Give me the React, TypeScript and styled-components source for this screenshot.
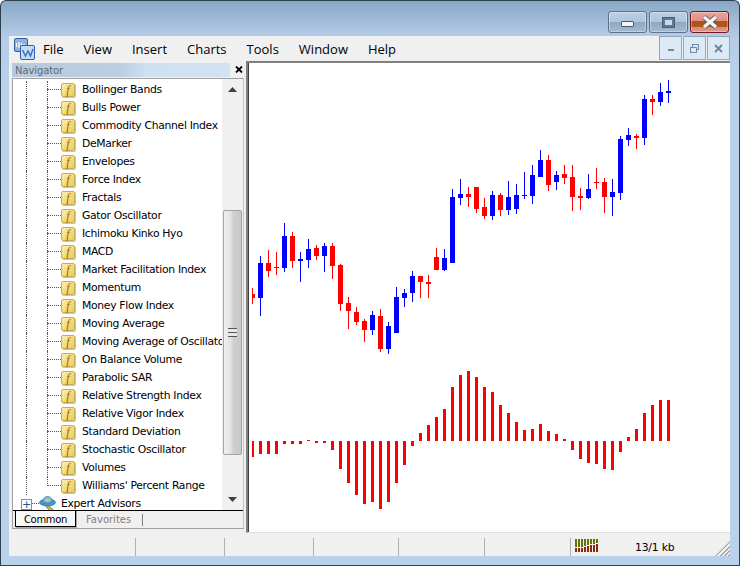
import * as React from 'react'
import styled, { createGlobalStyle } from 'styled-components'

const GlobalStyle = createGlobalStyle`
  html, body {
    margin: 0;
    padding: 0;
    background: #fff;
  }
  * {
    box-sizing: border-box;
  }
`

const UI_FONT = `"DejaVu Sans", Verdana, sans-serif`

const Frame = styled.div`
  width: 740px;
  height: 566px;
  display: flex;
  flex-direction: column;
  padding: 0 9px 9px 8px;
  border: 1px solid #2d3f4f;
  border-bottom-color: #16505e;
  border-radius: 6px 6px 0 0;
  background: linear-gradient(180deg, #88a6c6 0, #9ab6d3 14px, #b4cce6 36px, #b9d1ea 80px);
  overflow: hidden;
`

const TitleBar = styled.div`
  height: 35px;
  flex: none;
  display: flex;
  justify-content: flex-end;
  align-items: flex-start;
  gap: 2px;
  padding: 10px 1px 0 0;
`

const CaptionButton = styled.div<{ $close?: boolean }>`
  width: 39px;
  height: 22px;
  display: flex;
  align-items: center;
  justify-content: center;
  border: 1px solid ${p => (p.$close ? '#6e1a20' : '#5f748c')};
  border-radius: 3px;
  background: ${p =>
    p.$close
      ? 'linear-gradient(180deg, #e8a498 0, #df8f84 45%, #ad5018 46%, #b05a1e 75%, #d88a78 76%, #e09a8c 100%)'
      : 'linear-gradient(180deg, #bcd0e6 0, #afc5dd 48%, #8ea8c2 50%, #a3bad2 100%)'};
  box-shadow: inset 0 0 0 1px rgba(255, 255, 255, 0.35);
`

const MinGlyph = styled.div`
  width: 13px;
  height: 6px;
  margin-top: 4px;
  background: #f2f4f6;
  border: 1px solid #4e5d6c;
  border-radius: 1px;
`

const MaxGlyph = styled.div`
  width: 13px;
  height: 11px;
  background: #e8ecf0;
  border: 1px solid #4e5d6c;
  display: flex;
  align-items: center;
  justify-content: center;

  &::after {
    content: '';
    width: 7px;
    height: 5px;
    border: 2px solid #5b7a9a;
    background: #cdd8e4;
  }
`

const Client = styled.div`
  flex: 1;
  min-height: 0;
  display: flex;
  flex-direction: column;
  background: #f0f0f0;
`

const MenuBar = styled.div`
  height: 25px;
  flex: none;
  display: flex;
  align-items: center;
  padding-left: 5px;
`

const Logo = styled.svg`
  width: 21px;
  height: 22px;
  flex: none;
  margin-right: 8px;
`

const MenuItems = styled.div`
  display: flex;
  gap: 20px;
  flex: 1;
`

const MenuItem = styled.span`
  font: 13px "Open Sans", sans-serif;
  color: #000;
`

const MdiButtons = styled.div`
  display: flex;
  gap: 1px;
  align-self: flex-start;
`

const MdiButton = styled.div`
  width: 23px;
  height: 24px;
  display: flex;
  align-items: center;
  justify-content: center;
  background: #dce9f6;
  border: 1px solid #93a6b8;
`

const Main = styled.div`
  flex: 1;
  min-height: 0;
  display: flex;
`

const Navigator = styled.div`
  width: 237px;
  flex: none;
  display: flex;
  flex-direction: column;
  padding: 1px 2px 4px 3px;
`

const NavHeader = styled.div`
  height: 15px;
  flex: none;
  display: flex;
  align-items: center;
`

const NavTitle = styled.div`
  width: 218px;
  height: 14px;
  padding-left: 3px;
  font: 10px/15px ${UI_FONT};
  letter-spacing: -0.1px;
  color: #5c6c7c;
  background: linear-gradient(90deg, #b7c9dc 0, #bccee0 50%, #cfe0f1 62%, #d2e2f3 100%);
`

const NavClose = styled.svg`
  width: 8px;
  height: 7px;
  margin-left: 5px;
`

const NavBox = styled.div`
  flex: 1;
  min-height: 0;
  display: flex;
  flex-direction: column;
  margin-top: 1px;
  border: 1px solid #a0a0a0;
  border-right-color: #c4c4c4;
`

const TreeArea = styled.div`
  height: 431px;
  flex: none;
  display: flex;
  background: #fff;
  overflow: hidden;
`

const Tree = styled.div`
  flex: 1;
  min-width: 0;
  overflow: hidden;
  padding-top: 2px;
`

const Row = styled.div`
  height: 18px;
  display: flex;
  padding-left: 13px;
`

const Guide = styled.div<{ $half?: boolean }>`
  width: 21px;
  height: ${p => (p.$half ? '9px' : '18px')};
  flex: none;
  border-left: 1px dotted #555;
`

const Branch = styled.div`
  width: 14px;
  height: 9px;
  flex: none;
  margin-left: -21px;
  border-bottom: 1px dotted #555;
`

const FuncIcon = styled.div`
  width: 14px;
  height: 14px;
  flex: none;
  margin: 2px 7px 0 0;
  display: flex;
  align-items: center;
  justify-content: center;
  border: 1px solid #c8ae58;
  border-radius: 2px;
  background: linear-gradient(135deg, #fcefb0 0, #f6dc7c 50%, #f0cb52 100%);
  box-shadow: 1px 1px 0 #c4c4bc;
  font: italic 12px/12px "Liberation Serif", serif;
  color: #8a6a14;
`

const RowLabel = styled.span`
  font: 10.8px/18px ${UI_FONT};
  letter-spacing: -0.32px;
  white-space: nowrap;
  color: #000;
`

const PlusBox = styled.div`
  width: 11px;
  height: 11px;
  flex: none;
  margin: 4px 0 0 -5px;
  display: flex;
  align-items: center;
  justify-content: center;
  background: #fff;
  border: 1px solid #8c8c8c;
  font: 11px/9px ${UI_FONT};
  color: #2050a0;
`

const PlusLink = styled.div`
  width: 7px;
  height: 9px;
  flex: none;
  border-bottom: 1px dotted #555;
`

const ExpertIcon = styled.svg`
  width: 17px;
  height: 16px;
  flex: none;
  margin: 1px 5px 0 0;
`

const ScrollBar = styled.div`
  width: 21px;
  flex: none;
  display: flex;
  flex-direction: column;
  align-items: center;
  background: #f0f0f0;
`

const ScrollArrow = styled.svg<{ $down?: boolean }>`
  width: 9px;
  height: 5px;
  flex: none;
  margin: ${p => (p.$down ? '0 0 8px' : '8px 0 0')};
  transform: ${p => (p.$down ? 'rotate(180deg)' : 'none')};
`

const ScrollTrack = styled.div`
  flex: 1;
  width: 100%;
  display: flex;
  align-items: flex-start;
  justify-content: center;
  padding-top: 118px;
`

const ScrollThumb = styled.div`
  width: 19px;
  height: 245px;
  display: flex;
  align-items: center;
  justify-content: center;
  border: 1px solid #a4a4a4;
  border-radius: 2px;
  background: linear-gradient(90deg, #f0f0f0 0, #e2e2e2 40%, #cfcfcf 55%, #c8c8c8 100%);
`

const Grip = styled.div`
  width: 9px;
  height: 9px;
  background: repeating-linear-gradient(180deg, #555 0, #555 1px, #e8e8e8 1px, #e8e8e8 4px);
`

const TabStrip = styled.div`
  flex: 1;
  display: flex;
  align-items: flex-start;
  border-top: 1px solid #000;
  padding-left: 2px;
  background: #f0f0f0;
`

const ActiveTab = styled.div`
  width: 61px;
  height: 17px;
  margin-top: -1px;
  text-align: center;
  background: #f8f8f8;
  border: 1px solid #000;
  box-shadow: 1px 1px 0 #a8a8a8;
  font: 10px/17px ${UI_FONT};
  letter-spacing: -0.3px;
  color: #000;
`

const IdleTab = styled.div`
  height: 12px;
  margin-top: 3px;
  padding: 0 11px 0 10px;
  border-right: 1px solid #808080;
  font: 10px/12px ${UI_FONT};
  color: #808080;
`

const ChartPanel = styled.div`
  flex: 1;
  min-width: 0;
  background: #fff;
  border-top: 2px solid #808080;
  border-left: 2px solid #808080;
  border-bottom: 1px solid #e0e0e0;
  box-shadow: inset 1px 0 0 #404040;
`

const ChartSvg = styled.svg`
  display: block;
  width: 100%;
  height: 100%;
`

const StatusBar = styled.div`
  height: 23px;
  flex: none;
  display: flex;
  align-items: flex-end;
`

const StatusCell = styled.div<{ $w: number }>`
  width: ${p => p.$w}px;
  height: 18px;
  flex: none;
  border-right: 1px solid #b0b0b0;
`

const Traffic = styled.svg`
  width: 24px;
  height: 13px;
  flex: none;
  margin: 0 0 4px 4px;
`

const TrafficText = styled.span`
  margin: 0 0 2px 36px;
  font: 10.8px ${UI_FONT};
  letter-spacing: -0.2px;
  color: #000;
`

const SizeGrip = styled.div`
  width: 15px;
  height: 15px;
  margin-left: auto;
  background: repeating-linear-gradient(135deg, transparent 0, transparent 1.5px, #a8a8a8 1.5px, #a8a8a8 3px);
  clip-path: polygon(100% 0, 100% 100%, 0 100%);
`

const INDICATORS = [
  'Bollinger Bands',
  'Bulls Power',
  'Commodity Channel Index',
  'DeMarker',
  'Envelopes',
  'Force Index',
  'Fractals',
  'Gator Oscillator',
  'Ichimoku Kinko Hyo',
  'MACD',
  'Market Facilitation Index',
  'Momentum',
  'Money Flow Index',
  'Moving Average',
  'Moving Average of Oscillator',
  'On Balance Volume',
  'Parabolic SAR',
  'Relative Strength Index',
  'Relative Vigor Index',
  'Standard Deviation',
  'Stochastic Oscillator',
  'Volumes',
  "Williams' Percent Range",
]

const MENU = ['File', 'View', 'Insert', 'Charts', 'Tools', 'Window', 'Help']

const STATUS_CELLS = [127, 89, 89, 85, 86, 86]

const RED = '#ff0000'
const BLUE = '#0000ff'

// body top, body bottom, wick top, wick bottom, r = red / b = blue
type Candle = [number, number, number, number, 'r' | 'b']

const CANDLES: Candle[] = [
  [294, 298, 288, 304, 'r'],
  [263, 298, 256, 316, 'b'],
  [263, 271, 250, 277, 'r'],
  [267, 268, 252, 275, 'r'],
  [236, 268, 223, 272, 'b'],
  [236, 261, 232, 268, 'r'],
  [259, 261, 252, 282, 'b'],
  [249, 260, 239, 268, 'b'],
  [248, 256, 245, 260, 'r'],
  [246, 256, 243, 272, 'b'],
  [246, 266, 243, 279, 'r'],
  [265, 304, 264, 311, 'r'],
  [303, 311, 297, 329, 'r'],
  [312, 322, 307, 325, 'r'],
  [321, 330, 319, 342, 'r'],
  [315, 330, 311, 335, 'b'],
  [316, 349, 309, 352, 'r'],
  [326, 349, 322, 354, 'b'],
  [297, 333, 287, 333, 'b'],
  [293, 298, 289, 307, 'b'],
  [276, 293, 271, 302, 'b'],
  [276, 282, 276, 298, 'r'],
  [282, 284, 275, 298, 'r'],
  [257, 270, 248, 270, 'r'],
  [258, 270, 249, 271, 'b'],
  [197, 263, 189, 263, 'b'],
  [194, 198, 179, 205, 'b'],
  [194, 197, 187, 207, 'r'],
  [187, 209, 187, 213, 'r'],
  [207, 216, 198, 219, 'r'],
  [195, 216, 191, 220, 'b'],
  [195, 210, 193, 216, 'r'],
  [197, 210, 181, 215, 'b'],
  [195, 209, 184, 214, 'b'],
  [195, 196, 172, 199, 'b'],
  [175, 196, 165, 204, 'b'],
  [160, 177, 150, 177, 'b'],
  [160, 185, 155, 191, 'r'],
  [175, 182, 171, 190, 'b'],
  [174, 178, 165, 184, 'r'],
  [177, 197, 165, 211, 'r'],
  [196, 198, 188, 210, 'r'],
  [189, 198, 174, 199, 'b'],
  [182, 183, 168, 189, 'r'],
  [182, 197, 178, 213, 'r'],
  [192, 197, 179, 216, 'b'],
  [139, 193, 136, 200, 'b'],
  [135, 140, 128, 146, 'b'],
  [136, 138, 134, 149, 'r'],
  [99, 138, 95, 145, 'b'],
  [99, 102, 95, 115, 'r'],
  [92, 102, 83, 106, 'b'],
  [91, 93, 80, 103, 'b'],
]

// distance from the zero line at y=441, negative goes up
const HISTOGRAM = [
  16, 13, 13, 13, 3, 3, 3, -1, 2, 2, 9, 28, 42, 54, 63, 61, 68, 61, 42, 24, 5, -8, -16, -24, -32, -54, -66, -70,
  -64, -54, -49, -36, -28, -19, -11, -12, -17, -10, -7, -2, 9, 18, 22, 23, 28, 29, 11, -4, -12, -28, -36, -41, -41,
]

const X0 = 252
const STEP = 8
const ZERO = 441

const Chart = () => (
  <ChartSvg viewBox="248 63 482 469" shapeRendering="crispEdges">
    {CANDLES.map(([top, bottom, wickTop, wickBottom, tone], i) => {
      const c = X0 + STEP * i
      const left = Math.max(c - 2, X0)
      const fill = tone === 'r' ? RED : BLUE
      return (
        <g key={i} fill={fill}>
          <rect x={c} y={wickTop} width={1} height={wickBottom - wickTop} />
          <rect x={left} y={top} width={c + 3 - left} height={bottom - top} />
        </g>
      )
    })}
    {HISTOGRAM.map((v, i) => {
      const c = X0 + STEP * i
      const left = Math.max(c - 1, X0)
      return (
        <rect
          key={i}
          x={left}
          y={v < 0 ? ZERO + v : ZERO}
          width={c + 2 - left}
          height={Math.abs(v)}
          fill={RED}
        />
      )
    })}
  </ChartSvg>
)

const AppLogo = () => (
  <Logo viewBox="0 0 21 22">
    <rect x="0.5" y="0.5" width="13" height="13" rx="1.5" fill="#8fb2e0" stroke="#2f5fa8" />
    <path d="M2.5 9V5M5 10V4M7.5 8V5M10 10V6" stroke="#fff" strokeWidth="1.2" />
    <rect x="6.5" y="7.5" width="14" height="14" rx="1.5" fill="#c8daf2" stroke="#2f5fa8" />
    <path d="M8.5 12l3 6 2.5-5 2.5 5 2.5-7" fill="none" stroke="#2f6fc0" strokeWidth="1.4" />
  </Logo>
)

const ExpertGlyph = () => (
  <ExpertIcon viewBox="0 0 17 16">
    <path d="M8 9l6 4.5-1.6 2L7 11z" fill="#e8c030" stroke="#6a5210" strokeWidth="0.7" />
    <ellipse cx="8.5" cy="6.5" rx="8" ry="3.4" fill="#3f9bd8" stroke="#2a6a9c" strokeWidth="0.7" />
    <path d="M4 6c0-4 2-5.6 4.5-5.6S13 2 13 6c-2 1.5-7 1.5-9 0z" fill="#74bcec" stroke="#2a6a9c" strokeWidth="0.6" />
    <rect x="6.5" y="3.4" width="4" height="1.6" fill="#f0d050" />
  </ExpertIcon>
)

const TRAFFIC_BARS = [3, 3, 3, 4, 5, 6, 6, 7]

const TrafficMeter = () => (
  <Traffic viewBox="0 0 24 13" shapeRendering="crispEdges">
    {TRAFFIC_BARS.map((h, i) => (
      <g key={i}>
        <rect x={i * 3} y={0} width={2} height={12 - h - 1} fill="#66720a" />
        <rect x={i * 3} y={12 - h} width={2} height={h + 1} fill="#8a2c08" />
      </g>
    ))}
  </Traffic>
)

const App = () => (
  <Frame>
    <GlobalStyle />
    <TitleBar>
      <CaptionButton>
        <MinGlyph />
      </CaptionButton>
      <CaptionButton>
        <MaxGlyph />
      </CaptionButton>
      <CaptionButton $close>
        <svg width="18" height="14" viewBox="0 0 18 14">
          <path d="M3 2l12 10M15 2L3 12" stroke="#55606c" strokeWidth="5" />
          <path d="M3 2l12 10M15 2L3 12" stroke="#f4f4f4" strokeWidth="3.4" />
        </svg>
      </CaptionButton>
    </TitleBar>
    <Client>
      <MenuBar>
        <AppLogo />
        <MenuItems>
          {MENU.map(m => (
            <MenuItem key={m}>{m}</MenuItem>
          ))}
        </MenuItems>
        <MdiButtons>
          <MdiButton>
            <svg width="8" height="8" viewBox="0 0 8 8">
              <rect x="1" y="5" width="6" height="2" fill="#75879a" />
            </svg>
          </MdiButton>
          <MdiButton>
            <svg width="9" height="9" viewBox="0 0 9 9" fill="none" stroke="#75879a">
              <rect x="2.5" y="0.5" width="6" height="5" />
              <rect x="0.5" y="3.5" width="6" height="5" fill="#dce9f6" />
            </svg>
          </MdiButton>
          <MdiButton>
            <svg width="9" height="9" viewBox="0 0 9 9">
              <path d="M1 1l7 7M8 1L1 8" stroke="#75879a" strokeWidth="2" />
            </svg>
          </MdiButton>
        </MdiButtons>
      </MenuBar>
      <Main>
        <Navigator>
          <NavHeader>
            <NavTitle>Navigator</NavTitle>
            <NavClose viewBox="0 0 8 7">
              <path d="M1 0.5l6 6M7 0.5l-6 6" stroke="#000" strokeWidth="1.8" />
            </NavClose>
          </NavHeader>
          <NavBox>
            <TreeArea>
              <Tree>
                {INDICATORS.map((name, i) => (
                  <Row key={name}>
                    <Guide />
                    <Guide $half={i === INDICATORS.length - 1} />
                    <Branch />
                    <FuncIcon>f</FuncIcon>
                    <RowLabel>{name}</RowLabel>
                  </Row>
                ))}
                <Row>
                  <PlusBox>+</PlusBox>
                  <PlusLink />
                  <ExpertGlyph />
                  <RowLabel>Expert Advisors</RowLabel>
                </Row>
              </Tree>
              <ScrollBar>
                <ScrollArrow viewBox="0 0 9 5">
                  <path d="M4.5 0L9 5H0z" fill="#404040" />
                </ScrollArrow>
                <ScrollTrack>
                  <ScrollThumb>
                    <Grip />
                  </ScrollThumb>
                </ScrollTrack>
                <ScrollArrow viewBox="0 0 9 5" $down>
                  <path d="M4.5 0L9 5H0z" fill="#404040" />
                </ScrollArrow>
              </ScrollBar>
            </TreeArea>
            <TabStrip>
              <ActiveTab>Common</ActiveTab>
              <IdleTab>Favorites</IdleTab>
            </TabStrip>
          </NavBox>
        </Navigator>
        <ChartPanel>
          <Chart />
        </ChartPanel>
      </Main>
      <StatusBar>
        {STATUS_CELLS.map((w, i) => (
          <StatusCell key={i} $w={w} />
        ))}
        <TrafficMeter />
        <TrafficText>13/1 kb</TrafficText>
        <SizeGrip />
      </StatusBar>
    </Client>
  </Frame>
)

export default App
